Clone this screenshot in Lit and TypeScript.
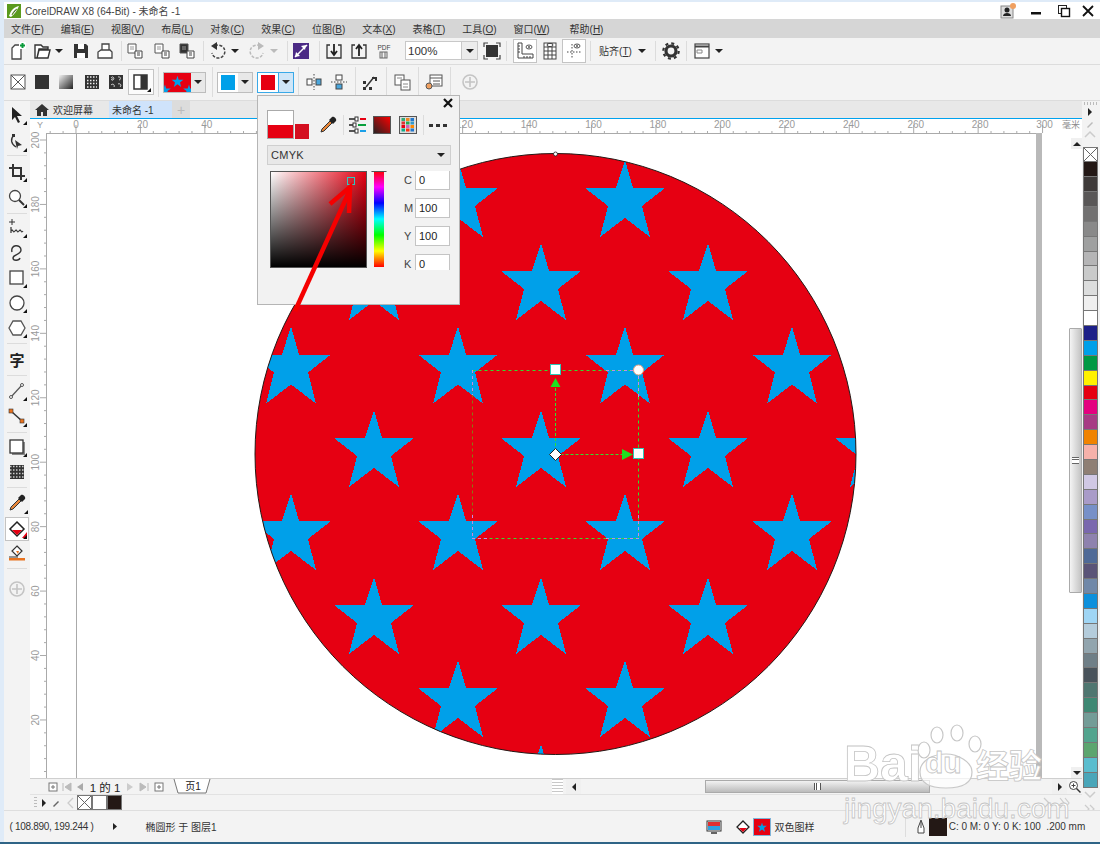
import { LitElement, css, html, svg } from "lit";
import { customElement } from "lit/decorators.js";

const ic = (body: unknown, w = 20, h = 20) =>
  html`<svg width=${w} height=${h} viewBox="0 0 ${w} ${h}">${body}</svg>`;

// little black corner that marks a flyout
const fly = svg`<path d="M20 20h-4l4-4z" fill="#111"/>`;
const drop = ic(svg`<path d="M0 0h8l-4 4z" fill="#222"/>`, 8, 4);
const plusCircle = ic(svg`<circle cx="10" cy="10" r="7" fill="none" stroke="#c4c4c4" stroke-width="1.6"/><path d="M10 5v10M5 10h10" stroke="#c4c4c4" stroke-width="1.6"/>`);
const sep = html`<span class="sep"></span>`;

const docs = (a: string) => ic(svg`<path d="M3 3h8v9H3z" fill=${a} stroke="#555"/><path d="M5 6h4M5 8h4" stroke="#999"/><path d="M10 10h7v7h-7z" fill="#fff" stroke="#444"/><path d="M12 12h3M12 14h3" stroke="#444"/>`);

const eyedropper = ic(svg`<path d="M3 17l1-3 8-8 2 2-8 8z" fill="#e8873a" stroke="#333"/><path d="M11 5l4 4 3-3c1-2-2-5-4-4z" fill="#222"/>`);

const tb1: [number, unknown][] = [
  [18, ic(svg`<path d="M4 18V7l3-3h6v14z" fill="#fff" stroke="#444" stroke-width="1.3"/><rect x="11" y="1" width="7" height="7" fill="#fff"/><path d="M14.5 2v5M12 4.500h5" stroke="#0a9a3a" stroke-width="2"/>`)],
  [42, ic(svg`<path d="M3 17V4h6l2 2h5v2H7l-2 9zM5 17l2-8h11l-2 8z" fill="#fff" stroke="#333" stroke-width="1.4"/>`)],
  [59, drop],
  [81, ic(svg`<path d="M3 3h12l2 2v12H3z" fill="#333"/><rect x="7" y="3" width="6" height="5" fill="#fff"/><rect x="6" y="12" width="8" height="5" fill="#fff"/>`)],
  [105, ic(svg`<path d="M7 9V3h7v6M3 17v-6l3-2h9l2 2v6z" fill="#fff" stroke="#444" stroke-width="1.3"/>`)],
  [121, sep],
  [135, docs("#fff")],
  [162, docs("#fff")],
  [187, docs("#333")],
  [203, sep],
  [218, ic(svg`<path d="M7 5a6.500 6.500 0 1 1-3 7" fill="none" stroke="#444" stroke-width="1.500" stroke-dasharray="3 1.500"/><path d="M9 1v8L3 5z" fill="#333"/>`)],
  [235, drop],
  [257, ic(svg`<path d="M13 5a6.500 6.500 0 1 0 3 7" fill="none" stroke="#bbb" stroke-width="1.500" stroke-dasharray="3 1.500"/><path d="M11 1v8l6-4z" fill="#bbb"/>`)],
  [274, ic(svg`<path d="M0 0h8l-4 4z" fill="#bbb"/>`, 8, 4)],
  [287, sep],
  [301, ic(svg`<rect x="2" y="2" width="16" height="16" fill="#4b2a85"/><path d="M4 16L16 4" stroke="#fff" stroke-width="1.500"/><path d="M10 5l5-1-1 5zM5 11l-1 5 5-1z" fill="#fff"/>`)],
  [319, sep],
  [334, ic(svg`<path d="M6 4H3v13h14V4h-3" fill="none" stroke="#333" stroke-width="1.300"/><path d="M10 3v10M7 10l3 4 3-4" fill="none" stroke="#222" stroke-width="1.800"/>`)],
  [359, ic(svg`<path d="M6 4H3v13h14V4h-3" fill="none" stroke="#333" stroke-width="1.300"/><path d="M10 15V5M7 8l3-4 3 4" fill="none" stroke="#222" stroke-width="1.800"/>`)],
  [384, ic(svg`<text x="10" y="9" font-size="6.500" text-anchor="middle" font-family="Liberation Sans" fill="#444">PDF</text><rect x="6" y="11" width="7" height="6" fill="none" stroke="#666"/><path d="M8 11v6M11 11v6" stroke="#666"/>`)],
  [441.500, html`<div class="zoomsel">100%<span class="a">${drop}</span></div>`],
  [492, ic(svg`<path d="M2 6V2h4M14 2h4v4M18 14v4h-4M6 18H2v-4" fill="none" stroke="#444" stroke-width="1.200"/><rect x="4" y="4" width="12" height="12" fill="#333"/>`)],
  [506, sep],
  [525, html`<span class="on">${ic(svg`<path d="M3 2h4v11h11v4H3z" fill="#fff" stroke="#444"/><path d="M3 5h2M3 8h2M3 11h2M9 15v2M12 15v2M15 15v2" stroke="#444"/><ellipse cx="14" cy="6" rx="3" ry="2" fill="none" stroke="#555"/><circle cx="14" cy="6" r="1" fill="#555"/>`)}</span>`],
  [550, ic(svg`<rect x="4" y="2" width="12" height="16" fill="#fff" stroke="#444"/><path d="M4 6h12M4 10h12M4 14h12M8 2v16M12 2v16" stroke="#444"/><ellipse cx="10" cy="4" rx="3" ry="1.600" fill="#fff" stroke="#444"/>`)],
  [574, html`<span class="on">${ic(svg`<path d="M3 11h14M8 3v15" stroke="#444" stroke-dasharray="1.500 1.500"/><ellipse cx="13" cy="5" rx="3" ry="2" fill="none" stroke="#555"/><circle cx="13" cy="5" r="1" fill="#555"/>`)}</span>`],
  [590, sep],
  [615.500, html`<span>贴齐(<u>T</u>)</span>`],
  [642, drop],
  [655, sep],
  [671, ic(svg`<circle cx="10" cy="10" r="5" fill="none" stroke="#333" stroke-width="3.200"/><circle cx="10" cy="10" r="7.700" fill="none" stroke="#333" stroke-width="2.200" stroke-dasharray="3 3.050"/>`)],
  [686, sep],
  [702, ic(svg`<rect x="3" y="3" width="14" height="14" fill="#fff" stroke="#444" stroke-width="1.200"/><path d="M3 5.500h14" stroke="#444" stroke-width="2"/><path d="M5 9h5v3H5z" fill="none" stroke="#888"/>`)],
  [719, drop],
];

const star = (cx: number, top: number, k = 1) => {
  const p = [[0, 0], [8, 28], [40, 28], [17, 46], [25, 77], [0, 58], [-25, 77], [-17, 46], [-40, 28], [-9, 28]];
  return p.map(([x, y]) => `${cx + x * k},${top + y * k}`).join(" ");
};

const patternSwatch = (w: number, h: number) =>
  ic(svg`<rect width=${w} height=${h} fill="#e60012"/><polygon points=${star(w / 2, h * 0.14, h / 130)} fill="#00a0e9"/><polygon points=${star(1, h * 0.6, h / 130)} fill="#00a0e9"/><polygon points=${star(w - 2, h * 0.6, h / 130)} fill="#00a0e9"/>`, w, h);

const tb2: [number, unknown][] = [
  [18, ic(svg`<rect x="3" y="3" width="14" height="14" fill="#fff" stroke="#555"/><path d="M3 3l14 14M17 3L3 17" stroke="#555"/>`)],
  [42, ic(svg`<rect x="3" y="3" width="14" height="14" fill="#333"/>`)],
  [66, html`<span class="grad"></span>`],
  [92, ic(svg`<rect x="3" y="3" width="14" height="14" fill="#333"/><path d="M5 5h10M5 8.500h10M5 11.500h10M5 15h10" stroke="#eee" stroke-width="1.500" stroke-dasharray="1.500 1.500"/>`)],
  [116, ic(svg`<rect x="3" y="3" width="14" height="14" fill="#333"/><path d="M5 6c2-3 4 1 2 2s-2-2 0-1M12 5c3-1 3 3 1 3M5 13c2-2 4 0 3 2M12 12c2-1 4 1 2 3" fill="none" stroke="#ddd"/>`)],
  [141, html`<span class="on half">${ic(svg`<rect x="3" y="3" width="13" height="14" fill="#fff" stroke="#333" stroke-width="1.500"/><rect x="9.500" y="3" width="6.500" height="14" fill="#333"/>${fly}`)}</span>`],
  [158, sep],
  [184, html`<span class="swatchbtn pat"><span class="fillbox">${patternSwatch(27, 19)}</span><span class="arr">${drop}</span></span>`],
  [212, sep],
  [235, html`<span class="swatchbtn"><span class="colorbox blue"></span><span class="arr">${drop}</span></span>`],
  [275, html`<span class="swatchbtn open"><span class="colorbox red"></span><span class="arr">${drop}</span></span>`],
  [298, sep],
  [314, ic(svg`<path d="M10 2v16" stroke="#444" stroke-dasharray="1.500 1.500"/><rect x="3" y="7" width="5" height="6" fill="#fff" stroke="#444"/><rect x="12" y="7" width="5" height="6" fill="#4aa6dc" stroke="#444"/>`)],
  [339, ic(svg`<path d="M2 10h16" stroke="#444" stroke-dasharray="1.500 1.500"/><rect x="7" y="3" width="6" height="5" fill="#fff" stroke="#444"/><rect x="7" y="12" width="6" height="5" fill="#4aa6dc" stroke="#444"/>`)],
  [355, sep],
  [370, ic(svg`<path d="M6 15L14 5" stroke="#333" stroke-width="1.500"/><path d="M12 5h5v4h-2V7h-3z" fill="#333"/><rect x="3" y="9" width="3" height="3" fill="#333"/><rect x="3" y="15" width="3" height="3" fill="#333"/><rect x="9" y="15" width="3" height="3" fill="#333"/>`)],
  [386, sep],
  [402, ic(svg`<rect x="3" y="3" width="9" height="10" fill="#fff" stroke="#555"/><rect x="9" y="8" width="9" height="10" fill="#fff" stroke="#555"/><path d="M5 6h5M11 12h5M11 15h5" stroke="#888"/>`)],
  [418, sep],
  [434, ic(svg`<rect x="6" y="3" width="12" height="11" fill="#fff" stroke="#555"/><path d="M6 6h12M9 9h7M9 12h7" stroke="#555"/><circle cx="5" cy="14" r="3" fill="#f0a060" stroke="#555"/>`)],
  [450, sep],
  [470, plusCircle],
];

const tools: [number, unknown][] = [
  [115, ic(svg`<path d="M5 2v13l3-3 3 6 2-1-3-6h5z" fill="#222"/>${fly}`)],
  [142, ic(svg`<path d="M7 3C3 7 4 12 9 15" fill="none" stroke="#333" stroke-width="1.300"/><path d="M8 8l7 5-4 1-1 3z" fill="#333"/><rect x="5" y="2" width="3" height="3" fill="#333"/>${fly}`)],
  [155, html`<span class="hsep"></span>`],
  [172, ic(svg`<path d="M6 2v12h12M2 6h12v12" fill="none" stroke="#333" stroke-width="2"/>${fly}`)],
  [198, ic(svg`<circle cx="8" cy="8" r="5.500" fill="#fff" stroke="#444" stroke-width="1.300"/><path d="M12 12l5 5" stroke="#333" stroke-width="2"/>${fly}`)],
  [213, html`<span class="hsep"></span>`],
  [228, ic(svg`<path d="M5 1v6M2 4h6" stroke="#333"/><path d="M4 9v6M4 13c2-3 2 3 4 0s2 3 4 0 2 3 4 0" fill="none" stroke="#333" stroke-width="1.200"/>${fly}`)],
  [253, ic(svg`<path d="M5 9c-2-8 9-8 9-2 0 5-8 4-8 8 0 3 6 3 7 0" fill="none" stroke="#333" stroke-width="1.400"/>`)],
  [278, ic(svg`<rect x="3" y="3" width="13" height="13" fill="#fff" stroke="#444" stroke-width="1.300"/>${fly}`)],
  [303, ic(svg`<circle cx="10" cy="10" r="7" fill="#fff" stroke="#444" stroke-width="1.300"/>${fly}`)],
  [328, ic(svg`<path d="M6 3h8l4 7-4 7H6l-4-7z" fill="#fff" stroke="#555" stroke-width="1.300"/>${fly}`)],
  [343, html`<span class="hsep"></span>`],
  [359, html`<span class="glyph">字</span>`],
  [375, html`<span class="hsep"></span>`],
  [391, ic(svg`<path d="M4 16L15 4" stroke="#555" stroke-width="1.200"/><circle cx="15" cy="4" r="1.500" fill="#fff" stroke="#555"/><circle cx="4" cy="16" r="1.500" fill="#fff" stroke="#555"/>${fly}`)],
  [417, ic(svg`<path d="M5 5l10 9" stroke="#333" stroke-width="1.500"/><rect x="2" y="2" width="4" height="4" fill="#e8721e" stroke="#333" stroke-width=".6"/><rect x="13" y="12" width="4" height="4" fill="#e8721e" stroke="#333" stroke-width=".6"/>${fly}`)],
  [432, html`<span class="hsep"></span>`],
  [447, ic(svg`<rect x="5" y="5" width="13" height="13" fill="#888"/><rect x="3" y="3" width="13" height="13" fill="#fff" stroke="#333" stroke-width="1.300"/>${fly}`)],
  [472, ic(svg`<rect x="3" y="3" width="14" height="14" fill="#333"/><path d="M3 4.500h14M3 8h14M3 11.500h14M3 15h14" stroke="#ccc" stroke-width="1.300" stroke-dasharray="1.500 1.500"/>`)],
  [487, html`<span class="hsep"></span>`],
  [503, html`<span class="flyout">${eyedropper}</span>`],
  [529, html`<span class="on tool">${ic(svg`<path d="M10 3l7 7-7 7-7-7z" fill="#fff" stroke="#222" stroke-width="1.500"/><path d="M5 11h10l-5 5z" fill="#e60012"/><path d="M20 13v6h-5z" fill="#e60012"/>${fly}`)}</span>`],
  [553, ic(svg`<path d="M10 3l5 5-5 5-5-5z" fill="#fff" stroke="#333" stroke-width="1.200"/><path d="M9 8h3l-1 3z" fill="#e8721e"/><rect x="2" y="15" width="16" height="2.500" fill="#e8721e"/><path d="M2 14h9" stroke="#333"/>`)],
  [568, html`<span class="hsep"></span>`],
  [589, plusCircle],
];

const palette = ["#231815", "#3e3a39", "#595757", "#727171", "#898989", "#9fa0a0", "#b5b5b6", "#c9caca", "#dcdddd", "#efefef", "#ffffff",
  "#1d2088", "#00a0e9", "#009944", "#fff100", "#e60012", "#e4007f", "#a73b84", "#f08300", "#f5b1aa", "#8f7f74",
  "#d0c8e4", "#a99bc8", "#7790c8", "#7a68ae", "#8e82ae", "#4f6a97", "#5a5478", "#7088a8", "#0d90dc", "#9fd5f4",
  "#b4ccdb", "#92a5ae", "#6f7f87", "#49535b", "#4f7670", "#3e8873", "#739c97", "#52a48e", "#5ca56f", "#5abdce", "#4aa6b9"];

const menus = [["文件", "F"], ["编辑", "E"], ["视图", "V"], ["布局", "L"], ["对象", "C"], ["效果", "C"], ["位图", "B"], ["文本", "X"], ["表格", "T"], ["工具", "O"], ["窗口", "W"], ["帮助", "H"]];

const hTicks = Array.from({ length: 78 }, (_, i) => 76 - 25.8 + i * 12.888);
const hLabels = [20, 40, 60, 80, 100, 120, 140, 160, 180, 200, 220, 240, 260, 280, 300];
const vLabels = [20, 40, 60, 80, 100, 120, 140, 160, 180, 200];
const unit = 3.222;

// zero-size cells spaced by margins, so each item sits centred on its coordinate
const run = (items: [number, unknown][], start: number, end: number, vertical = false) =>
  items.map(([c, body], i) => {
    const before = c - (i === 0 ? start : items[i - 1][0]);
    const after = i === items.length - 1 ? end - c : 0;
    const size = vertical
      ? `height:0;margin-top:${before}px;margin-bottom:${after}px`
      : `width:0;margin-left:${before}px;margin-right:${after}px`;
    return html`<span class="cell" style=${size}>${body}</span>`;
  });

const stars = [160, 326.500, 493, 660].flatMap((y) => [291, 458, 625, 792].map((x) => star(x, y)))
  .concat([243, 410, 577, 744].flatMap((y) => [374, 541, 708, 875].map((x) => star(x, y))));

@customElement("app-root")
export class AppRoot extends LitElement {
  static styles = css`
    :host {
      display: flex;
      flex-direction: column;
      position: relative;
      width: 1100px;
      height: 844px;
      overflow: hidden;
      box-sizing: border-box;
      padding: 2px 0 0 4px;
      background: #dfebf8;
      color: #333;
      font: 10px "Liberation Sans", "Noto Sans CJK SC", sans-serif;
    }
    svg { display: block; overflow: visible; }
    .cell { display: flex; align-items: center; justify-content: center; flex: none; white-space: nowrap; }
    .title { height: 17px; background: #fff; display: flex; align-items: center; padding-left: 3px; }
    .title .name { margin-left: 4px; color: #444; }
    .winctl { margin-left: auto; display: flex; align-items: center; }
    .menu { height: 19px; background: #d6d6d6; display: flex; align-items: center; padding-left: 7px; gap: 16.900px; }
    .menu .last { margin-left: 3px; }
    .tb1 { height: 26px; background: #f3f3f3; border-bottom: 1px solid #dcdcdc; display: flex; align-items: center; }
    .tb2 { height: 36px; background: #f3f3f3; border-bottom: 1px solid #dcdcdc; display: flex; align-items: center; }
    .sep { width: 1px; height: 20px; background: #dcdcdc; flex: none; }
    .tb2 .sep { height: 30px; }
    .hsep { width: 20px; height: 1px; background: #dcdcdc; flex: none; }
    .zoomsel { flex: none; width: 73px; height: 19px; box-sizing: border-box; background: #fff; border: 1px solid #c8c8c8; display: flex; align-items: center; padding-left: 2px; font-size: 11.500px; }
    .zoomsel .a { margin-left: auto; width: 15px; height: 17px; background: #ececec; border-left: 1px solid #c8c8c8; display: flex; align-items: center; justify-content: center; }
    .on { display: flex; flex: none; border: 1px solid #c4c4c4; background: #fff; padding: 1px; }
    .on.half { background: #fbfbfb; padding: 2px; }
    .grad { width: 14px; height: 14px; flex: none; background: linear-gradient(135deg, #f2f2f2, #222); }
    .glyph { font: bold 15px "Noto Sans CJK SC", sans-serif; color: #222; }
    .flyout { position: relative; display: flex; }
    .flyout::after { content: ""; position: absolute; right: -1px; bottom: -1px; border: 2px solid transparent; border-right-color: #111; border-bottom-color: #111; }
    .swatchbtn { display: flex; flex: none; height: 21px; box-sizing: border-box; border: 1px solid #bdbdbd; background: #fff; }
    .swatchbtn .arr { width: 14px; display: flex; align-items: center; justify-content: center; background: #e8e8e8; }
    .swatchbtn.open { border-color: #39a9e8; }
    .swatchbtn.open .arr { background: #cfe6f8; border-left: 1px solid #39a9e8; }
    .colorbox { width: 14px; height: 15px; margin: 2px 3px; }
    .blue { background: #00a0e9; }
    .red { background: #e60012; }
    .fillbox { display: flex; overflow: hidden; }

    .work { height: 709px; display: flex; }
    .toolbox { width: 26px; flex: none; background: #f3f3f3; display: flex; flex-direction: column; align-items: center; }
    .center { flex: 1; min-width: 0; display: flex; flex-direction: column; }
    .tabs { height: 18px; box-sizing: border-box; display: flex; background: #e8e8e8; border-bottom: 1px solid #00a2ee; }
    .tab { display: flex; align-items: center; box-sizing: border-box; height: 17px; }
    .tab.home { width: 79px; padding-left: 5px; gap: 4px; }
    .tab.cur { width: 63px; background: #cfe3fb; padding-left: 3px; }
    .tab.add { width: 18px; background: #dcdcdc; justify-content: center; color: #bbb; font-size: 14px; }
    .hr { height: 14px; background: #fff; flex: none; }
    .mid { flex: 1; display: flex; min-height: 0; }
    .vr { width: 16px; flex: none; background: #fff; }
    .vscroll { width: 14px; flex: none; background: #fff; display: flex; flex-direction: column; align-items: flex-end; }
    .vscroll .btn { width: 11px; height: 11px; background: #f0f0f0; display: flex; align-items: center; justify-content: center; }
    .vscroll .up { margin-top: 5px; }
    .vscroll .thumb { margin-top: 179px; width: 13px; height: 265px; box-sizing: border-box; border: 1px solid #aaa; border-radius: 1px; background: linear-gradient(to right, #f4f4f4, #c4c4c4); display: flex; align-items: center; justify-content: center; }
    .vscroll .down { margin-top: auto; }
    .grip { width: 7px; height: 5px; border-top: 1px solid #666; border-bottom: 1px solid #666; background: linear-gradient(#fff 1px, #666 1px, #666 2px, #fff 2px); }
    .nav { height: 16px; flex: none; background: #f3f3f3; border-top: 1px solid #cfcfcf; box-sizing: border-box; display: flex; align-items: center; }
    .navtext { font-size: 11.500px; white-space: nowrap; color: #222; }
    .pagetab { position: relative; display: flex; flex: none; }
    .pagetab span { position: absolute; left: 0; right: 0; top: -1px; text-align: center; color: #222; }
    .hs { margin-left: auto; display: flex; align-items: center; height: 15px; }
    .hs .dots { width: 11px; height: 15px; background: repeating-linear-gradient(#c8c8c8 0 1px, #fff 1px 3px); margin-right: 3px; }
    .hs .btn { width: 15px; height: 15px; background: #f0f0f0; display: flex; align-items: center; justify-content: center; }
    .hs .thumb { margin-left: 124px; width: 225px; height: 13px; box-sizing: border-box; border: 1px solid #aaa; background: linear-gradient(#f2f2f2, #bbb); display: flex; align-items: center; justify-content: center; }
    .hs .grip { width: 5px; height: 7px; border: 0; border-left: 1px solid #555; border-right: 1px solid #555; background: linear-gradient(to right, #fff 1px, #555 1px, #555 2px, #fff 2px); }
    .hs .right { margin-left: 122px; }
    .hs .mag { width: 15px; display: flex; justify-content: center; }
    .docpal { height: 16px; flex: none; background: #f3f3f3; border-top: 1px solid #e2e2e2; box-sizing: border-box; display: flex; align-items: center; }
    .docpal .dots { width: 3px; height: 12px; flex: none; background: repeating-linear-gradient(#bbb 0 1px, transparent 1px 3px); }
    .docpal .sw { width: 15px; height: 15px; box-sizing: border-box; border: 1px solid #777; }
    .docpal .tail { margin-left: auto; margin-right: 12px; display: flex; gap: 9px; }
    .pal { width: 18px; flex: none; background: #f3f3f3; display: flex; flex-direction: column; align-items: flex-start; }
    .pal .hd { height: 46px; flex: none; width: 100%; display: flex; flex-direction: column; align-items: center; gap: 3px; padding-right: 2px; box-sizing: border-box; }
    .pal .dots { margin-top: 1px; width: 13px; height: 3px; background: repeating-linear-gradient(to right, #bbb 0 1px, transparent 1px 3px); }
    .sw2 { width: 15px; height: 14.900px; box-sizing: border-box; margin-left: 1px; border: 1px solid #777; flex: none; border-width: 0 1px 1px 1px; }
    .sw2.none { border-width: 1px; }
    .status { height: 32px; background: #f3f3f3; border-top: 1px solid #dedede; box-sizing: border-box; display: flex; align-items: center; color: #333; }
    .coords { letter-spacing: -.3px; }
    .vl { width: 1px; height: 20px; background: #ddd; flex: none; }
    .st-fill { width: 18px; height: 18px; flex: none; box-sizing: border-box; border: 1px solid #7fb4d8; }
    .st-black { width: 18px; height: 18px; flex: none; background: #231815; }
    .desk { height: 2px; background: #2f6486; margin-left: -4px; flex: none; }

    .popup { position: absolute; left: 257px; top: 95px; width: 203px; height: 210px; box-sizing: border-box; border: 1px solid #b5b5b5; background: #f2f2f2; padding: 14px 9px 0 9px; display: flex; flex-direction: column; }
    .popup .x { position: absolute; right: 5px; top: 1px; }
    .ptop { display: flex; align-items: flex-end; height: 29px; }
    .prev { width: 27px; height: 29px; box-sizing: border-box; border: 1px solid #aaa; background: linear-gradient(#fff 50%, #e60012 50%); flex: none; }
    .prev2 { width: 14px; height: 15px; background: #d40f20; margin-left: 1px; flex: none; }
    .ptools { display: flex; align-items: center; height: 29px; }
    .popsel { margin-top: 6px; height: 20px; box-sizing: border-box; width: 184px; background: #e8e8e8; border: 1px solid #cfcfcf; display: flex; align-items: center; justify-content: space-between; padding: 0 5px 0 3px; font-size: 11px; letter-spacing: .3px; }
    .pbody { display: flex; margin-top: 6px; padding-left: 3px; height: 99px; overflow: hidden; }
    .field { position: relative; width: 97px; height: 97px; box-sizing: border-box; border: 1px solid #555; background: linear-gradient(to top, #000, transparent), linear-gradient(to right, #fff, #e60012); flex: none; }
    .marker { position: absolute; left: 76px; top: 5px; width: 8px; height: 8px; border: 1px solid #2ec8c0; box-sizing: border-box; }
    .hue { position: relative; width: 10px; height: 96px; margin-left: 7px; background: linear-gradient(#f00, #f0f, #00f, #0ff, #0f0, #ff0, #f00); flex: none; }
    .cap { position: absolute; left: -3px; top: -4px; width: 16px; height: 5px; box-sizing: border-box; border: 1px solid #555; background: #ddd; border-radius: 1px; }
    .cmyk { margin-left: 20px; display: grid; grid-template-columns: 11px 35px; row-gap: 8px; align-items: center; align-content: start; margin-top: -1px; font-size: 11px; }
    .cmyk label { color: #444; }
    .cmyk span { height: 20px; box-sizing: border-box; border: 1px solid #c4c4c4; background: #fff; padding-left: 3px; line-height: 18px; color: #222; }
    .top { position: absolute; left: 0; top: 0; pointer-events: none; }
    .mark { position: absolute; left: 842px; top: 722px; width: 215px; height: 103px; pointer-events: none; color: #fff; -webkit-text-stroke: .8px #c4c4c4; }
    .mark .bai { position: absolute; left: 2px; top: 14px; font: bold 50px/56px "Liberation Sans", sans-serif; }
    .mark .du { position: absolute; left: 83px; top: 24px; font: bold 30px/34px "Liberation Sans", sans-serif; }
    .mark .jy { position: absolute; left: 134px; top: 20px; font: bold 33px/44px "Noto Sans CJK SC", sans-serif; }
    .mark .url { position: absolute; left: 2px; top: 72px; font: 28px/30px "Liberation Sans", sans-serif; white-space: nowrap; }
    .mark svg { position: absolute; left: 70px; top: 0; }
  `;

  private ruler() {
    return html`<svg width="1052" height="14" viewBox="30 119 1052 14">
      ${hTicks.map((x, i) => svg`<path d="M${x} ${i % 5 === 2 ? 125 : 131}V133" stroke="#aaa"/>`)}
      ${hLabels.map((v) => svg`<text x=${76 + v * unit + 2} y="128" font-size="10" text-anchor="middle" fill="#9a9a9a" font-family="Liberation Sans">${v}</text>`)}
      <text x="76" y="128" font-size="10" text-anchor="middle" fill="#9a9a9a" font-family="Liberation Sans">0</text>
      <text x="1071" y="128" font-size="9" text-anchor="middle" fill="#8a8a8a" font-family="Noto Sans CJK SC">毫米</text>
      <text x="40" y="128" font-size="9" text-anchor="middle" fill="#9a9a9a" font-family="Liberation Sans">Y</text>
    </svg>`;
  }

  private vruler() {
    const ys = Array.from({ length: 52 }, (_, i) => 140 + i * 12.888);
    return html`<svg width="16" height="645" viewBox="30 133 16 645">
      ${ys.map((y, i) => svg`<path d="M${i % 5 === 0 ? 40 : 44} ${y}H46" stroke="#aaa"/>`)}
      ${vLabels.map((v) => {
        const y = 720 + (20 - v) * unit;
        return svg`<text transform="translate(39 ${y}) rotate(-90)" font-size="10" text-anchor="middle" fill="#9a9a9a" font-family="Liberation Sans">${v}</text>`;
      })}
    </svg>`;
  }

  private canvas() {
    return html`<svg class="canvas" width="1022" height="645" viewBox="46 133 1022 645">
      <defs><clipPath id="disc"><circle cx="555.500" cy="454" r="300.500"/></clipPath></defs>
      <rect x="46" y="133" width="1022" height="645" fill="#fff"/>
      <path d="M46.500 133V778M76.500 133V778M46 133.500H1037" stroke="#aaa"/>
      <rect x="1036" y="133" width="6" height="645" fill="#b9b9b9"/>
      <circle cx="555.500" cy="454" r="300.500" fill="#e60012"/>
      <g clip-path="url(#disc)" shape-rendering="crispEdges">
        ${stars.map((s) => svg`<polygon points=${s} fill="#00a0e9"/>`)}
      </g>
      <circle cx="555.500" cy="454" r="300.500" fill="none" stroke="#231815"/>
      <circle cx="555.500" cy="154" r="2" fill="#fff" stroke="#222" stroke-width=".8"/>
      <path d="M472.500 370.500H638.500V538.500H472.500" fill="none" stroke="#2fe02f" stroke-dasharray="3 3"/>
      <path d="M472.500 370.500V538.500" stroke="#8a7a10" stroke-dasharray="3 3"/>
      <path d="M606 370.500H639M638.500 370V400M638.500 515V539M606 538.500H639M472 538.500H490M472.500 370V395M472.500 515V538" stroke="#c58be6" stroke-dasharray="3 3"/>
      <path d="M555.500 388V454M555.500 454.500H622" stroke="#2fe02f" stroke-dasharray="3 2"/>
      <path d="M555.500 378l5 9h-10zM633 454.500l-11-5.500v11z" fill="#1fe01f"/>
      <rect x="550.500" y="364.500" width="10" height="10" fill="#fff" stroke="#2ec8b8"/>
      <rect x="633.500" y="448.500" width="10" height="10" fill="#fff" stroke="#2ec8b8"/>
      <circle cx="638.500" cy="370" r="5" fill="#fff" stroke="#e8a080"/>
      <path d="M555.500 448.500l6 6-6 6-6-6z" fill="#fff" stroke="#222"/>
    </svg>`;
  }

  private popup() {
    return html`<div class="popup">
      <span class="x">${ic(svg`<path d="M2 2l8 8M10 2l-8 8" stroke="#111" stroke-width="2.200"/>`, 12, 12)}</span>
      <div class="ptop">
        <span class="prev"></span><span class="prev2"></span>
        <div class="ptools">
          ${run([
            [61, eyedropper],
            [76, sep],
            [91, ic(svg`<path d="M1 4h7M1 10h7M1 16h7" stroke="#555" stroke-width="2"/><path d="M12 4h6" stroke="#e60012" stroke-width="2"/><path d="M10 10h8" stroke="#09a03c" stroke-width="2"/><path d="M12 16h6" stroke="#1aa0e8" stroke-width="2"/><rect x="7" y="2" width="3" height="4" fill="#fff" stroke="#333"/><rect x="5" y="8" width="3" height="4" fill="#fff" stroke="#333"/><rect x="7" y="14" width="3" height="4" fill="#fff" stroke="#333"/>`)],
            [115, ic(svg`<defs><linearGradient id="pg" x1="0" y1="1" x2="1" y2="0"><stop offset="0" stop-color="#222"/><stop offset="1" stop-color="#f00"/></linearGradient></defs><rect x="1.500" y="1.500" width="17" height="17" fill="url(#pg)" stroke="#555"/>`)],
            [141, ic(svg`<rect x="1.500" y="1.500" width="17" height="17" fill="#ddd" stroke="#555"/>${["#3a7", "#e82", "#27c", "#d33", "#2a5", "#39c", "#e60012", "#c6b", "#f80", "#1a8", "#f31", "#27c"].map((c, i) => svg`<rect x=${3.500 + (i % 3) * 4.500} y=${3 + Math.floor(i / 3) * 3.500} width="3.500" height="3" fill=${c}/>`)}`)],
            [156, sep],
            [171, ic(svg`<path d="M1 9h4v3H1zM8 9h4v3H8zM15 9h4v3h-4z" fill="#333"/>`)],
          ], 42, 182)}
        </div>
      </div>
      <div class="popsel"><span>CMYK</span>${drop}</div>
      <div class="pbody">
        <div class="field"><span class="marker"></span></div>
        <div class="hue"><span class="cap"></span></div>
        <div class="cmyk">
          <label>C</label><span>0</span>
          <label>M</label><span>100</span>
          <label>Y</label><span>100</span>
          <label>K</label><span>0</span>
        </div>
      </div>
    </div>`;
  }

  render() {
    const none = "background:linear-gradient(45deg,transparent 48%,#666 48%,#666 52%,transparent 52%),linear-gradient(-45deg,#fff 48%,#666 48%,#666 52%,#fff 52%)";
    return html`
      <div class="title">
        ${ic(svg`<rect width="14" height="14" fill="#5a9a1e"/><path d="M2 12C4 6 7 3 12 2 10 6 8 10 4 13z" fill="#fff"/><path d="M5 11C6 8 8 6 10 5" stroke="#5a9a1e"/>`, 14, 14)}
        <span class="name">CorelDRAW X8 (64-Bit) - 未命名 -1</span>
        <div class="winctl">
          ${run([
            [1008, ic(svg`<rect x="2" y="4" width="12" height="12" fill="#ddd" stroke="#888"/><circle cx="8" cy="8" r="2.500" fill="#222"/><path d="M4 14c0-4 8-4 8 0z" fill="#222"/><circle cx="14" cy="4" r="3" fill="#f0a060"/>`, 18, 18)],
            [1036, ic(svg`<rect x="2" y="8" width="10" height="2.500" fill="#111"/>`, 14, 14)],
            [1064, ic(svg`<rect x="1.500" y="1.500" width="8" height="8" fill="#fff" stroke="#222"/><rect x="4.500" y="4.500" width="8" height="8" fill="#fff" stroke="#111" stroke-width="1.400"/>`, 14, 14)],
            [1088, ic(svg`<path d="M2 2l10 10M12 2L2 12" stroke="#111" stroke-width="1.800"/>`, 14, 14)],
          ], 992, 1100)}
        </div>
      </div>

      <div class="menu">
        ${menus.map(([t, k], i) => html`<span class=${i === 11 ? "last" : ""}>${t}(<u>${k}</u>)</span>`)}
      </div>

      <div class="tb1">${run(tb1, 4, 730)}</div>
      <div class="tb2">${run(tb2, 4, 490)}</div>

      <div class="work">
        <div class="toolbox">${run(tools, 101, 606, true)}</div>
        <div class="center">
          <div class="tabs">
            <div class="tab home">${ic(svg`<path d="M7 1L0 7h2v6h4V9h2v4h4V7h2z" fill="#333"/>`, 14, 14)}欢迎屏幕</div>
            <div class="tab cur">未命名 -1</div>
            <div class="tab add">+</div>
          </div>
          <div class="hr">${this.ruler()}</div>
          <div class="mid">
            <div class="vr">${this.vruler()}</div>
            ${this.canvas()}
            <div class="vscroll">
              <span class="btn up">${ic(svg`<path d="M0 4h8L4 0z" fill="#222"/>`, 8, 4)}</span>
              <span class="thumb"><span class="grip"></span></span>
              <span class="btn down">${drop}</span>
            </div>
          </div>
          <div class="nav">
            ${run([
              [53, ic(svg`<rect x="2" y="2" width="8" height="8" fill="#fff" stroke="#777"/><path d="M6 4v4M4 6h4" stroke="#777"/>`, 12, 12)],
              [67, ic(svg`<path d="M1 1v8M9 1v8L3 5z" stroke="#bbb" fill="#bbb"/>`, 10, 10)],
              [80, ic(svg`<path d="M8 1v8L2 5z" fill="#aaa"/>`, 10, 10)],
              [105, html`<span class="navtext">1 的 1</span>`],
              [130, ic(svg`<path d="M2 1v8l6-4z" fill="#ccc"/>`, 10, 10)],
              [144, ic(svg`<path d="M1 1v8l6-4zM9 1v8" stroke="#bbb" fill="#bbb"/>`, 10, 10)],
              [159, ic(svg`<rect x="2" y="2" width="8" height="8" fill="#fff" stroke="#777"/><path d="M6 4v4M4 6h4" stroke="#777"/>`, 12, 12)],
              [193, html`<span class="pagetab">${ic(svg`<path d="M0 0l4 14h28l4-14" fill="#fff" stroke="#777"/>`, 38, 15)}<span>页1</span></span>`],
            ], 30, 214)}
            <div class="hs">
              <span class="dots"></span>
              <span class="btn">${ic(svg`<path d="M4 0v8L0 4z" fill="#222"/>`, 4, 8)}</span>
              <span class="thumb"><span class="grip"></span></span>
              <span class="btn right">${ic(svg`<path d="M0 0v8l4-4z" fill="#222"/>`, 4, 8)}</span>
              <span class="mag">${ic(svg`<circle cx="5.500" cy="5.500" r="4" fill="#fff" stroke="#444"/><path d="M8.500 8.500l4 4" stroke="#333" stroke-width="1.500"/><path d="M3.500 5.500h4M5.500 3.500v4" stroke="#444"/>`, 13, 13)}</span>
            </div>
          </div>
          <div class="docpal">
            ${run([
              [35, html`<span class="dots"></span>`],
              [44, ic(svg`<path d="M0 0v8l4-4z" fill="#222"/>`, 4, 8)],
              [56, ic(svg`<path d="M1 8l5-5 1 1-5 5z" fill="#666"/>`, 9, 9)],
              [70, ic(svg`<path d="M6 0L1 5l5 5" fill="none" stroke="#ccc" stroke-width="1.300"/>`, 7, 10)],
            ], 30, 77)}
            <span class="sw" style=${none}></span>
            <span class="sw" style="background:#fff"></span>
            <span class="sw" style="background:#231815"></span>
            <span class="tail">
              ${ic(svg`<path d="M1 0l5 5-5 5" fill="none" stroke="#ccc" stroke-width="1.300"/>`, 7, 10)}
              ${ic(svg`<path d="M1 0l4 5-4 5M6 0l4 5-4 5" fill="none" stroke="#ccc" stroke-width="1.200"/>`, 11, 10)}
            </span>
          </div>
        </div>
        <div class="pal">
          <div class="hd">
            <span class="dots"></span>
            ${ic(svg`<path d="M0 0v8l4-4z" fill="#222"/>`, 4, 8)}
            ${ic(svg`<path d="M1 8l5-5 1 1-5 5z" fill="#bbb"/>`, 9, 9)}
            ${ic(svg`<path d="M0 6l5-5 5 5" fill="none" stroke="#ccc" stroke-width="1.500"/>`, 10, 7)}
          </div>
          <span class="sw2 none" style=${none}></span>
          ${palette.map((c) => html`<span class="sw2" style="background:${c}"></span>`)}
          <span style="margin:3px 0 0 3px">${ic(svg`<path d="M0 1l5 5 5-5" fill="none" stroke="#ccc" stroke-width="1.500"/>`, 10, 7)}</span>
          <span style="margin:7px 0 0 3px">${ic(svg`<path d="M0 0l4 4-4 4M5 0l4 4-4 4" fill="none" stroke="#ccc" stroke-width="1.200"/>`, 10, 8)}</span>
        </div>
      </div>

      <div class="status">
        ${run([
          [51.500, html`<span class="coords">( 108.890, 199.244 )</span>`],
          [115, ic(svg`<path d="M0 0v7l4-3.500z" fill="#222"/>`, 4, 7)],
          [181, html`<span>椭圆形 于 图层1</span>`],
          [714, ic(svg`<rect x="1" y="1" width="14" height="10" fill="#fff" stroke="#333"/><rect x="2" y="2" width="12" height="4" fill="#e03030"/><rect x="2" y="6" width="12" height="4" fill="#30a0e0"/><path d="M5 13h6" stroke="#333" stroke-width="1.500"/>`, 16, 14)],
          [743, ic(svg`<path d="M7 1l6 6-6 6-6-6z" fill="#fff" stroke="#222" stroke-width="1.300"/><path d="M3 8h8l-4 4z" fill="#e60012"/>`, 14, 14)],
          [762, html`<span class="st-fill">${ic(svg`<rect width="16" height="16" fill="#e60012"/><polygon points=${star(8, 3.500, 0.12)} fill="#00a0e9"/>`, 16, 16)}</span>`],
          [794.500, html`<span>双色图样</span>`],
          [905, html`<span class="vl"></span>`],
          [921, ic(svg`<path d="M4 1l3 8v5H1V9z" fill="#fff" stroke="#444"/><path d="M4 3v6" stroke="#444"/>`, 8, 15)],
          [938, html`<span class="st-black"></span>`],
          [1017, html`<span>C: 0 M: 0 Y: 0 K: 100 &nbsp;.200 mm</span>`],
        ], 4, 1090)}
      </div>
      <div class="desk"></div>

      ${this.popup()}

      <svg class="top" width="1100" height="844" viewBox="0 0 1100 844">
        <path d="M295 311L349 192" stroke="#f50000" stroke-width="4.500" fill="none"/>
        <path d="M330 204L350 187 349 213" stroke="#f50000" stroke-width="4.500" fill="none"/>
      </svg>

      <div class="mark">
        ${ic(svg`<g fill="none" stroke="#c8c8c8" stroke-width="1.200"><ellipse cx="25" cy="13" rx="6" ry="8"/><ellipse cx="45" cy="11" rx="6" ry="8"/><ellipse cx="63" cy="22" rx="6" ry="8"/><ellipse cx="12" cy="28" rx="6" ry="8"/><path d="M8 50c0-12 14-18 26-18s26 8 26 18-8 16-26 16S8 60 8 50z" fill="#fff" fill-opacity=".7"/></g>`, 75, 70)}
        <span class="bai">Bai</span>
        <span class="du">du</span>
        <span class="jy">经验</span>
        <span class="url">jingyan.baidu.com</span>
      </div>
    `;
  }
}
